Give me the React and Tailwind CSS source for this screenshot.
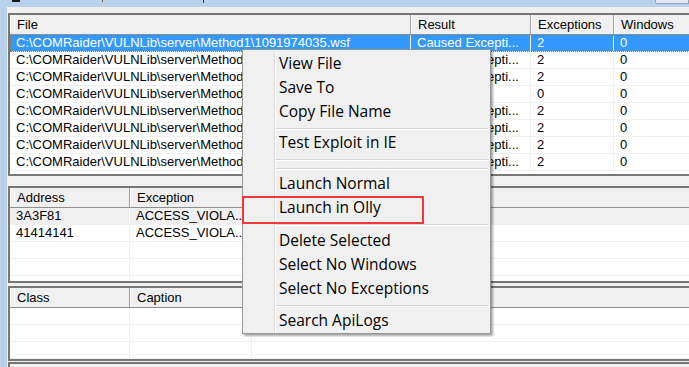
import React from "react";

// list view + context menu, COMRaider style
const files = [
  { f: "C:\\COMRaider\\VULNLib\\server\\Method1\\1091974035.wsf", r: "Caused Excepti...", e: "2", w: "0" },
  { f: "C:\\COMRaider\\VULNLib\\server\\Method1\\1091974036.wsf", r: "Caused Excepti...", e: "2", w: "0" },
  { f: "C:\\COMRaider\\VULNLib\\server\\Method1\\1091974037.wsf", r: "Caused Excepti...", e: "2", w: "0" },
  { f: "C:\\COMRaider\\VULNLib\\server\\Method1\\1091974038.wsf", r: "Terminated", e: "0", w: "0" },
  { f: "C:\\COMRaider\\VULNLib\\server\\Method1\\1091974039.wsf", r: "Caused Excepti...", e: "2", w: "0" },
  { f: "C:\\COMRaider\\VULNLib\\server\\Method1\\1091974040.wsf", r: "Caused Excepti...", e: "2", w: "0" },
  { f: "C:\\COMRaider\\VULNLib\\server\\Method1\\1091974041.wsf", r: "Caused Excepti...", e: "2", w: "0" },
  { f: "C:\\COMRaider\\VULNLib\\server\\Method1\\1091974042.wsf", r: "Caused Excepti...", e: "2", w: "0" },
];

const menu = [
  "View File",
  "Save To",
  "Copy File Name",
  "sep-7",
  "Test Exploit in IE",
  "sep-9",
  "sep-8",
  "Launch Normal",
  "Launch in Olly",
  "sep-9",
  "Delete Selected",
  "Select No Windows",
  "Select No Exceptions",
  "sep-8",
  "Search ApiLogs",
];

const sepHeight = { "sep-7": "h-[7px]", "sep-8": "h-[8px]", "sep-9": "h-[9px]" };

function HeadCell({ className = "", children }) {
  return (
    <div className={`shrink-0 h-full pl-[6px] pt-px leading-[18px] border-l border-l-white border-r border-r-[#a0a0a0] whitespace-nowrap overflow-hidden ${className}`}>
      {children}
    </div>
  );
}

function Cell({ className = "", children }) {
  return (
    <div className={`shrink-0 h-full pl-[6px] leading-[16px] border-r border-r-[#f0f0f0] whitespace-nowrap overflow-hidden ${className}`}>
      {children}
    </div>
  );
}

function Row({ className = "", children }) {
  return <div className={`flex h-[17px] border-b border-[#f0f0f0] ${className}`}>{children}</div>;
}

function ListBox({ className = "", children }) {
  return (
    <div className={`w-[700px] shrink-0 border-2 border-[#767676] bg-white overflow-hidden ${className}`}>
      {children}
    </div>
  );
}

function Header({ children }) {
  return <div className="flex h-[20px] bg-[#f0f0f0] border-b border-[#8f8f8f]">{children}</div>;
}

function ContextMenu() {
  return (
    <div className="absolute left-[242px] top-[49px] w-[249px] bg-[#f0f0f0] border border-[#979797] pt-[2px] shadow-[2px_2px_2px_rgba(0,0,0,0.35)] font-['Open_Sans',sans-serif] text-[15.5px] text-black">
      {menu.map((item, i) =>
        item.startsWith("sep") ? (
          <div key={i} className={`flex ${sepHeight[item]}`}>
            <div className="w-[32px] shrink-0 border-r border-[#dcdcdc]" />
            <div className="flex-1 border-l border-white pt-[4px] pr-[2px]">
              <div className="h-px bg-[#d4d4d4]" />
              <div className="h-px bg-white" />
            </div>
          </div>
        ) : (
          <div key={i} className="flex h-[24px]">
            <div className="w-[32px] shrink-0 border-r border-[#dcdcdc]" />
            <div className="flex-1 border-l border-white pl-[3px] leading-[22px] whitespace-nowrap">{item}</div>
          </div>
        )
      )}
    </div>
  );
}

export default function App() {
  return (
    <div className="relative w-[689px] h-[367px] overflow-hidden bg-[#b9d1ea] font-['Liberation_Sans',Arial,sans-serif] text-[13px] text-black">
      {/* clipped title bar */}
      <div className="h-[7px] flex items-start">
        <div className="ml-[12px] w-[8px] h-[2px] bg-[#1b1b1b]" />
        <div className="ml-[82px] w-px h-[2px] bg-[#7a5a2a]" />
        <div className="ml-[100px] w-px h-[3px] bg-[#2a3f6a]" />
        <div className="ml-auto w-[34px] h-[4px] bg-[#dfe8f2] border border-t-0 border-[#8fa3bb] rounded-bl-[2px]" />
      </div>

      <div className="ml-[7px] h-[360px] bg-[#f0f0f0] pl-px pt-[6px] flex flex-col">
        {/* results */}
        <ListBox className="h-[163px]">
          <Header>
            <HeadCell className="w-[401px]">File</HeadCell>
            <HeadCell className="w-[120px]">Result</HeadCell>
            <HeadCell className="w-[83px]">Exceptions</HeadCell>
            <HeadCell className="w-[92px]">Windows</HeadCell>
          </Header>
          {files.map((row, i) => (
            <Row
              key={i}
              className={i === 0 ? "bg-[#3399ff] text-white outline-1 outline-dotted outline-[#cc6600] -outline-offset-1" : ""}
            >
              <Cell className={`w-[401px] pl-[5px] ${i === 0 ? "border-r-[#8cc4ff]" : ""}`}>{row.f}</Cell>
              <Cell className={`w-[120px] ${i === 0 ? "border-r-[#8cc4ff]" : ""}`}>{row.r}</Cell>
              <Cell className={`w-[83px] ${i === 0 ? "border-r-[#8cc4ff]" : ""}`}>{row.e}</Cell>
              <Cell className="w-[92px]">{row.w}</Cell>
            </Row>
          ))}
        </ListBox>

        {/* exceptions */}
        <ListBox className="h-[97px] mt-[10px]">
          <Header>
            <HeadCell className="w-[120px]">Address</HeadCell>
            <HeadCell className="w-[122px]">Exception</HeadCell>
          </Header>
          <Row className="bg-[#f0f0f0]">
            <Cell className="w-[120px] pl-[5px] border-r-white">3A3F81</Cell>
            <Cell className="w-[122px] border-r-white">ACCESS_VIOLA...</Cell>
          </Row>
          <Row>
            <Cell className="w-[120px] pl-[5px]">41414141</Cell>
            <Cell className="w-[122px]">ACCESS_VIOLA...</Cell>
          </Row>
          <Row>
            <Cell className="w-[120px]" />
            <Cell className="w-[122px]" />
          </Row>
          <Row>
            <Cell className="w-[120px]" />
            <Cell className="w-[122px]" />
          </Row>
          <Row>
            <Cell className="w-[120px]" />
            <Cell className="w-[122px]" />
          </Row>
        </ListBox>

        {/* windows */}
        <ListBox className="h-[75px] mt-[3px]">
          <Header>
            <HeadCell className="w-[120px]">Class</HeadCell>
            <HeadCell className="w-[122px]">Caption</HeadCell>
          </Header>
          {[0, 1, 2].map((i) => (
            <Row key={i}>
              <Cell className="w-[120px]" />
              <Cell className="w-[122px]" />
            </Row>
          ))}
        </ListBox>

        <div className="w-[700px] h-[6px] mt-px border-t-2 border-x-2 border-[#767676] bg-[#f0f0f0] shrink-0" />
      </div>

      <ContextMenu />
      <div className="absolute left-[242px] top-[196px] w-[182px] h-[28px] border-2 border-[#ee3a3a]" />
    </div>
  );
}
